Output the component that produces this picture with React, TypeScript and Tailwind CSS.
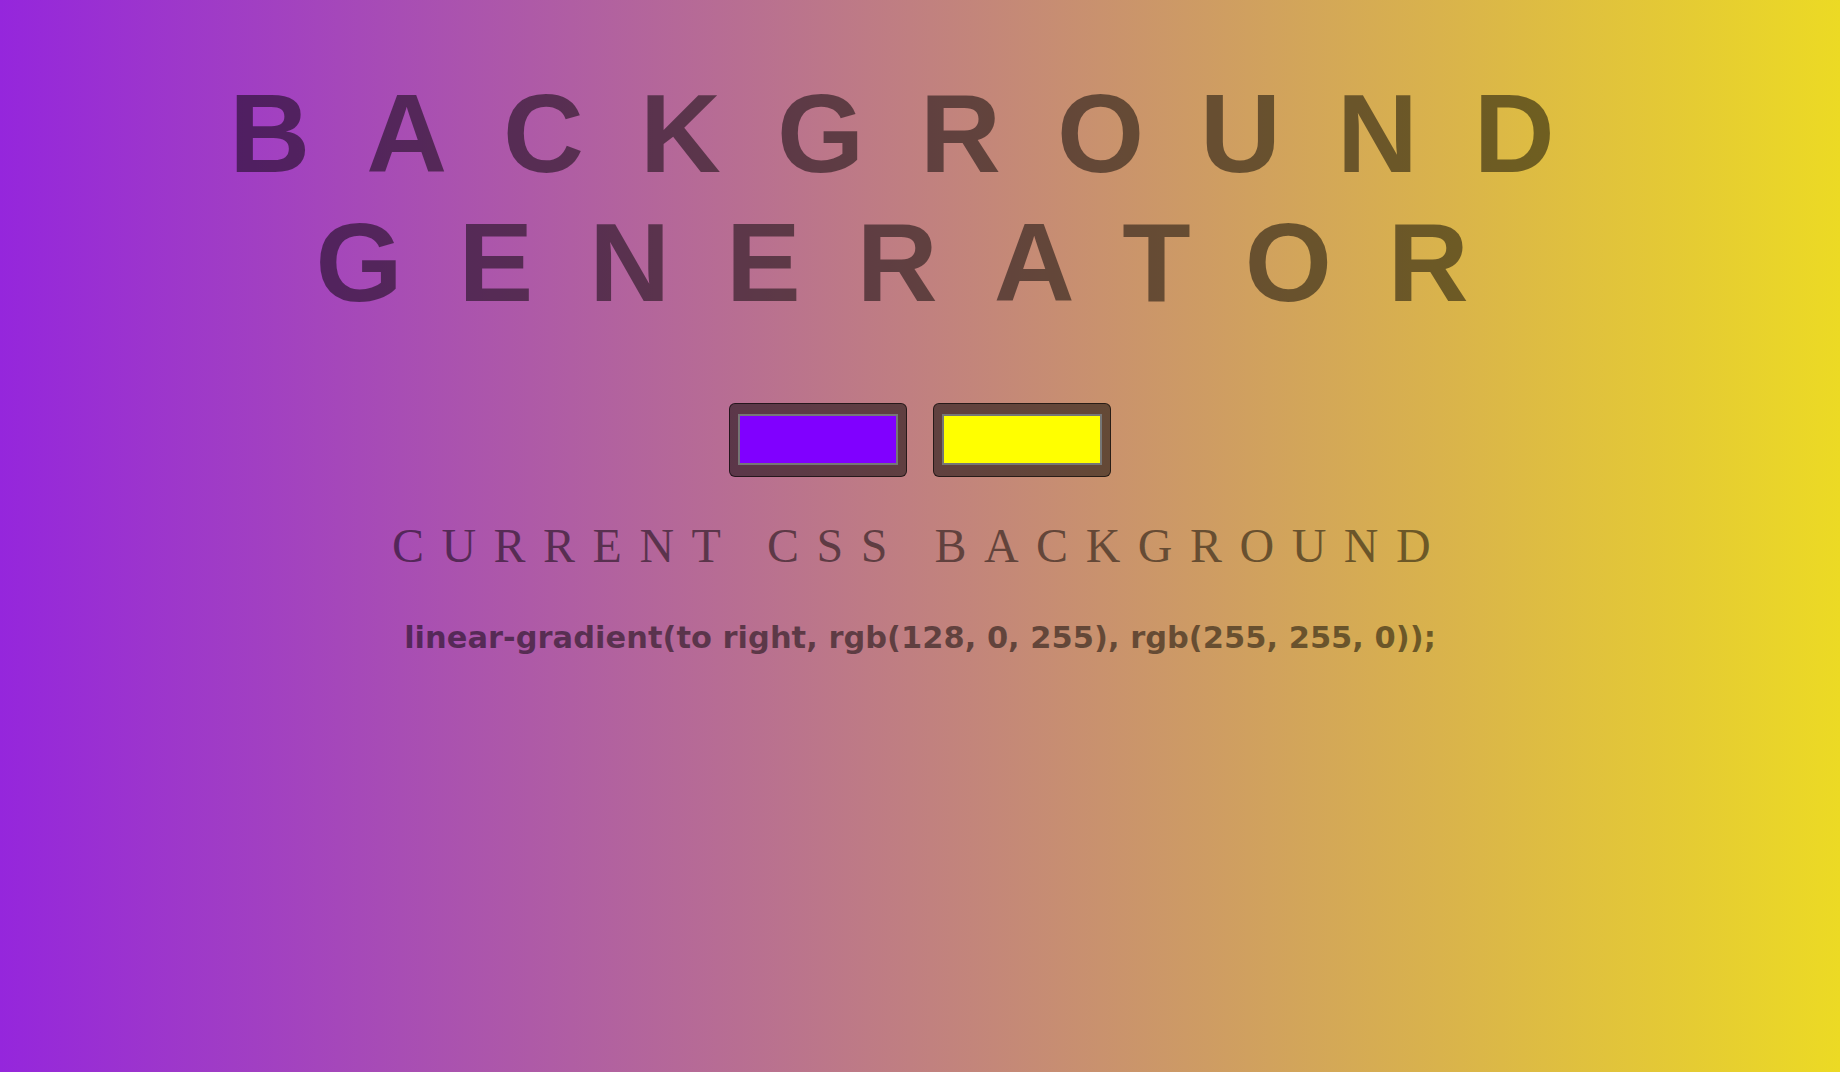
const swatches = ["#8000ff", "#ffff00"];

const ColorBox = ({ color }: { color: string }) => {
  return (
    <div className="w-[178px] h-[74px] flex items-center justify-center rounded-[6px] border border-black/60 bg-black/50">
      <div className="w-[160px] h-[51px] border-2 border-[#767676]" style={{ backgroundColor: color }} />
    </div>
  );
};

const App = () => {
  return (
    <div className="min-h-screen w-full flex flex-col items-center text-center bg-[linear-gradient(to_right,#9526dc,#ecda24)] font-['Liberation_Sans',Arial,sans-serif] text-black/50">
      <h1 className="mt-[70px] text-[112px] leading-[1.15] font-bold tracking-[56px]">BACKGROUND GENERATOR</h1>

      <div className="mt-[75px] flex gap-[26px]">
        {swatches.map((c) => (
          <ColorBox key={c} color={c} />
        ))}
      </div>

      <h2 className="mt-[41px] text-[48px] leading-[1.15] font-normal tracking-[17.5px] font-['Liberation_Serif','Times_New_Roman',serif]">
        CURRENT CSS BACKGROUND
      </h2>

      <p className="mt-[47px] text-[30.5px] leading-[1.15] font-bold font-['DejaVu_Sans',sans-serif]">
        linear-gradient(to right, rgb(128, 0, 255), rgb(255, 255, 0));
      </p>
    </div>
  );
};

export default App;
